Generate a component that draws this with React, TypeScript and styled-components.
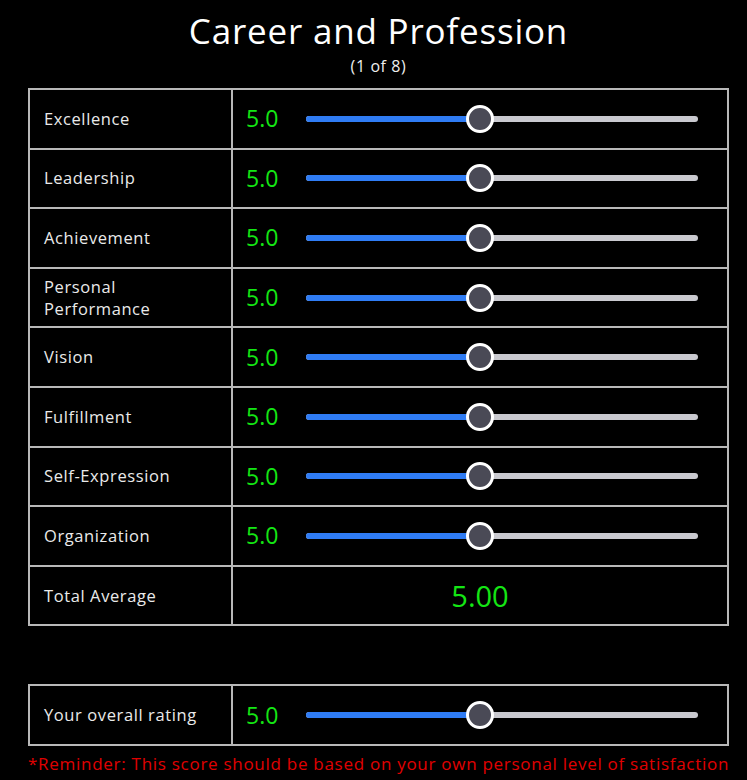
import React from "react";
import styled, { createGlobalStyle } from "styled-components";

const Global = createGlobalStyle`
  html, body { margin: 0; padding: 0; background: #000; }
  body { font-family: "Open Sans", "Lato", sans-serif; color: #eee; }
`;

const Page = styled.div`
  width: 701px;
  margin-left: 28px;
  display: flex;
  flex-direction: column;
  align-items: stretch;
`;

const Title = styled.h1`
  margin: 10px 0 0;
  font-size: 35px;
  font-weight: 400;
  line-height: 42px;
  letter-spacing: 0.8px;
  text-align: center;
  color: #fff;
`;

const Sub = styled.div`
  font-size: 16px;
  line-height: 18px;
  letter-spacing: 0.6px;
  text-align: center;
  color: #eee;
  margin-top: 5px;
`;

const Table = styled.div<{ $mt: number }>`
  margin-top: ${(p) => p.$mt}px;
  border: 2px solid #b8b8b8;
  display: flex;
  flex-direction: column;
`;

const Row = styled.div`
  display: grid;
  grid-template-columns: 203px 1fr;
  height: 57.6px;
  & + & { border-top: 2px solid #b8b8b8; }
`;

const Label = styled.div`
  border-right: 2px solid #b8b8b8;
  display: flex;
  align-items: center;
  padding-left: 14px;
  font-size: 16.5px;
  line-height: 22px;
  color: #eaeaea;
  letter-spacing: 0.6px;
`;

const Cell = styled.div`
  display: flex;
  align-items: center;
  padding-left: 13px;
  padding-right: 29px;
`;

const CenterCell = styled.div`
  display: flex;
  align-items: center;
  justify-content: center;
`;

const Value = styled.span`
  color: #14e614;
  font-size: 23px;
  width: 60px;
  flex: none;
  line-height: 1;
`;

const BigValue = styled.span`
  color: #14e614;
  font-size: 29px;
  line-height: 1;
`;

const Track = styled.div`
  position: relative;
  flex: 1;
  height: 6px;
  border-radius: 3px;
  background: #c9c9cf;
`;

const Fill = styled.div`
  position: absolute;
  left: 0;
  top: 0;
  bottom: 0;
  background: #2f7cf4;
  border-radius: 3px;
`;

const Thumb = styled.div`
  position: absolute;
  top: 50%;
  width: 22px;
  height: 22px;
  margin-left: -14px;
  margin-top: -14px;
  border-radius: 50%;
  border: 3px solid #fff;
  background: #4a4a56;
`;

const Reminder = styled.div`
  margin-top: 6px;
  color: #e00000;
  font-size: 17px;
  letter-spacing: 0.72px;
  text-align: center;
  white-space: nowrap;
`;

const Slider: React.FC<{ value: number }> = ({ value }) => {
  const pct = ((value - 1) / 9) * 100;
  return (
    <Track>
      <Fill style={{ width: `${pct}%` }} />
      <Thumb style={{ left: `${pct}%` }} />
    </Track>
  );
};

const items = [
  "Excellence",
  "Leadership",
  "Achievement",
  "Personal Performance",
  "Vision",
  "Fulfillment",
  "Self-Expression",
  "Organization",
];

export default function App() {
  return (
    <>
      <Global />
      <Page>
        <Title>Career and Profession</Title>
        <Sub>(1 of 8)</Sub>
        <Table $mt={13}>
          {items.map((it) => (
            <Row key={it}>
              <Label>{it === "Personal Performance" ? <span>Personal<br />Performance</span> : it}</Label>
              <Cell>
                <Value>5.0</Value>
                <Slider value={5} />
              </Cell>
            </Row>
          ))}
          <Row>
            <Label>Total Average</Label>
            <CenterCell>
              <BigValue>5.00</BigValue>
            </CenterCell>
          </Row>
        </Table>
        <Table $mt={58}>
          <Row>
            <Label>Your overall rating</Label>
            <Cell>
              <Value>5.0</Value>
              <Slider value={5} />
            </Cell>
          </Row>
        </Table>
        <Reminder>*Reminder: This score should be based on your own personal level of satisfaction</Reminder>
      </Page>
    </>
  );
}
